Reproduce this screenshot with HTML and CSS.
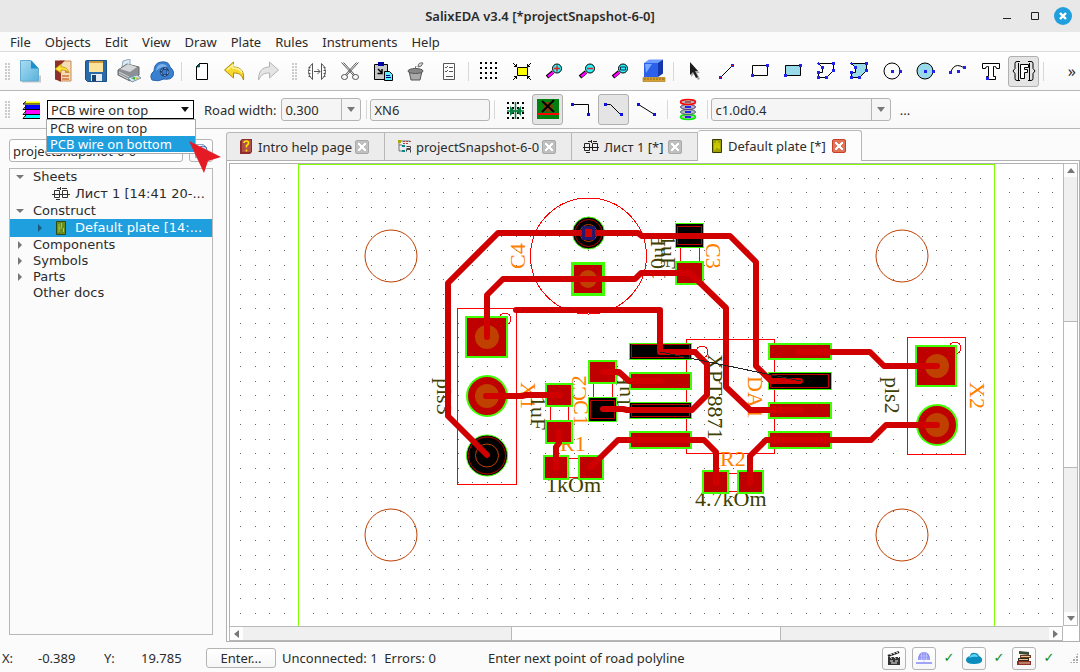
FILE: index.html
```html
<!doctype html>
<html lang="en">
<head>
	<meta charset="utf-8" />
	<title>SalixEDA v3.4 [*projectSnapshot-6-0]</title>
	<link rel="stylesheet" href="styles.css">
</head>
<body>
	<header class="titlebar">
		<h1>SalixEDA v3.4 [*projectSnapshot-6-0]</h1>
		<div class="winbtns">
			<button aria-label="Minimize"><svg width="18" height="18"><path d="M5 11.500h8" stroke="#222"/></svg></button>
			<button aria-label="Maximize"><svg width="18" height="18"><path d="M5.500 5.500h7v7h-7z" fill="none" stroke="#222"/></svg></button>
			<button aria-label="Close"><svg width="18" height="18"><circle cx="9" cy="9" r="9" fill="#209fdf"/><path d="M6 6l6 6M12 6l-6 6" stroke="#fff" stroke-width="2.400"/></svg></button>
		</div>
	</header>
	<nav class="menubar">
		<button>File</button>
		<button>Objects</button>
		<button>Edit</button>
		<button>View</button>
		<button>Draw</button>
		<button>Plate</button>
		<button>Rules</button>
		<button>Instruments</button>
		<button>Help</button>
	</nav>

	<div class="toolbar">
		<i class="grip"></i>
		<button aria-label="New"><svg width="24" height="24"><defs><linearGradient id="gnew" x1="0" y1="0" x2="1" y2="1"><stop offset="0" stop-color="#a9dcf2"/><stop offset="1" stop-color="#58b2dc"/></linearGradient></defs><path d="M4 22.500h18v-6" stroke="#c8c8c8" stroke-width="2" fill="none"/><path d="M2.500 1.500h10.500l7.500 8v12.500h-18z" fill="url(#gnew)" stroke="#64acd0"/><path d="M13 1.500v8h7.500z" fill="#1b8fc9"/></svg></button>
		<button aria-label="Open"><svg width="24" height="24"><path d="M9 2h11v20h-12z" fill="#f4dcb4" stroke="#c98c58"/><path d="M4 1.500h10l-4 4v17l-6-2z" fill="#8e2f2c"/><path d="M11 17h7M11 20h7M14 13h4" stroke="#d0743c" stroke-width="1.500"/><path d="M4 10l6-5v3c5 0 7 2 8 6-3-3-5-3-8-3v3z" fill="#ffe43a" stroke="#c08a14" stroke-width=".8"/></svg></button>
		<button aria-label="Save"><svg width="24" height="24"><path d="M1.500 2.500q0-1 1-1h20v21h-19l-2-2z" fill="#2a6aa8" stroke="#1c4f86"/><path d="M5 2h14v11h-14z" fill="#fbe39a"/><path d="M5 2h14v2h-14z" fill="#d09a3c"/><path d="M7 15h11v7h-11z" fill="#e4ecf2"/><path d="M8 16h4v6h-4z" fill="#17456f"/></svg></button>
		<button aria-label="Print"><svg width="24" height="24"><path d="M5 8l1-6 7-2 0 6z" fill="#dceaf6" stroke="#8fa6bc"/><path d="M1 11l9-6 12 3v8l-9 6-12-6z" fill="#8c9094" stroke="#666"/><path d="M3 10l8-5 9 3-7 5z" fill="#d4d6d8"/><path d="M2 13l10 5M2 15l9 5" stroke="#d8d8d8"/><path d="M11 19l9-3 4 3-9 4z" fill="#cfe4f5" stroke="#7d95aa"/><path d="M14 19l4-1v3z" fill="#3fa83a"/><path d="M18 18l4 1-2 2z" fill="#e0b83a"/></svg></button>
		<button aria-label="Cloud save"><svg width="24" height="24"><path d="M2 21q-3-5 2-9 0-8 7-9 8-1 9 5 5 4 3 9-2 4-9 3-6 3-12 1z" fill="#3a80d0" stroke="#2a62ac"/><path d="M6 12q1-7 6-7 4 0 5 3-5-1-11 4z" fill="#7cb2ea"/><circle cx="14.500" cy="13" r="3.500" fill="none" stroke="#1d3f72" stroke-width="2.500"/><circle cx="14.500" cy="13" r="3.500" fill="none" stroke="#a0bede" stroke-width="1" stroke-dasharray="2 2"/></svg></button>
		<i class="sep"></i>
		<button aria-label="New sheet"><svg width="24" height="24"><path d="M9.500 4.500h8v16h-11v-13z" fill="#fff" stroke="#000"/><path d="M6.500 8l3-3.500v3.500z" fill="#008080" stroke="#000" stroke-width=".6"/></svg></button>
		<button aria-label="Undo"><svg width="24" height="24"><path d="M1.500 11l9-8v5c7 0 11 4 10 13-2-6-5-7-10-7v5z" fill="#f6d92c" stroke="#b08a10"/><path d="M4 11l6-5v3c5 0 8 2 9 5" fill="none" stroke="#fff7a4" stroke-width="1.400"/></svg></button>
		<button aria-label="Redo"><svg width="24" height="24"><path d="M22.500 11l-9-8v5c-7 0-11 4-11 13 3-6 6-7 11-7v5z" fill="#e4e4e4" stroke="#b4b4b4"/></svg></button>
		<i class="grip wide"></i>
		<button aria-label="Mirror"><svg width="24" height="24" fill="none" stroke="#555"><path d="M7.500 4.500q-4 3-4 8t4 8zM16.500 4.500q4 3 4 8t-4 8zM9 12.500h6M12.500 10l2.500 2.500-2.500 2.500"/><path d="M4.500 8v10M19.500 8v10" stroke-width="2" stroke-dasharray="1 2"/></svg></button>
		<button aria-label="Cut"><svg width="24" height="24" fill="none" stroke="#555"><path d="M3.500 3.500l12 13M20.500 3.500l-12 13M5.500 3.500l11 12M18.500 3.500l-11 12"/><ellipse cx="6.500" cy="18" rx="3" ry="2.500"/><ellipse cx="17.500" cy="18" rx="3" ry="2.500"/></svg></button>
		<button aria-label="Paste"><svg width="24" height="24"><path d="M3.500 5.500h13v15h-13z" fill="#c8c8c8" stroke="#000"/><path d="M7 3h6v4h-6z" fill="#0000a0"/><path d="M7 10l4 4M11 10v4.500h-4.500" stroke="#000" stroke-width="1.500" fill="none"/><path d="M13.500 12.500h5l3 3v6h-8z" fill="#60f0ff" stroke="#000"/><path d="M15 16.500h4M15 18.500h5" stroke="#000080"/></svg></button>
		<button aria-label="Delete"><svg width="24" height="24"><path d="M5 12h13l-2 9h-9z" fill="#aaa" stroke="#555"/><ellipse cx="11.500" cy="12" rx="7.500" ry="2.500" fill="#888" stroke="#555"/><path d="M11 10l1-3M14 8q0-5 5-4-1 4-5 4z" fill="#ddd" stroke="#666"/></svg></button>
		<button aria-label="Properties"><svg width="24" height="24" fill="none" stroke="#555"><path d="M6.500 4.500h11v16h-11z"/><path d="M8 8l1 1 2-2M12 8.500h4M8 12l1 1 2-2M12 12.500h4M9 17.500h7"/></svg></button>
		<i class="sep"></i>
		<button aria-label="Grid"><svg width="24" height="24" stroke="#000" stroke-width="2" stroke-dasharray="2 3"><path d="M3 4h18M3 9h18M3 14h18M3 19h18"/></svg></button>
		<button aria-label="Fit"><svg width="24" height="24" fill="none" stroke="#000"><path d="M7.500 8.500h10v8h-10z" fill="#ff0"/><path d="M3 4l4 4M21 4l-4 4M3 21l4-4M21 21l-4-4M4 7.500h2.500v-2.500M20 7.500h-2.500v-2.500M4 17.500h2.500v2.500M20 17.500h-2.500v2.500"/></svg></button>
		<button aria-label="Zoom in"><svg width="24" height="24"><path d="M4 18l6-5" stroke="#000" stroke-width="4"/><path d="M5 17.500l5-4" stroke="#f0f" stroke-width="2.500"/><circle cx="14" cy="9.500" r="4.500" fill="#2ef0f8" stroke="#000"/><path d="M11 9.500h6M14 6.500v6" stroke="#e02020" stroke-width="1.500"/></svg></button>
		<button aria-label="Zoom out"><svg width="24" height="24"><path d="M4 18l6-5" stroke="#000" stroke-width="4"/><path d="M5 17.500l5-4" stroke="#f0f" stroke-width="2.500"/><circle cx="14" cy="9.500" r="4.500" fill="#2ef0f8" stroke="#000"/><path d="M11 9.500h6" stroke="#e02020" stroke-width="1.500"/></svg></button>
		<button aria-label="Zoom window"><svg width="24" height="24"><path d="M4 18l6-5" stroke="#000" stroke-width="4"/><path d="M5 17.500l5-4" stroke="#f0f" stroke-width="2.500"/><circle cx="14" cy="9.500" r="4.500" fill="#2ef0f8" stroke="#000"/><path d="M11.500 8h5v3h-5z" fill="none" stroke="#035"/></svg></button>
		<button aria-label="3D view"><svg width="24" height="24"><path d="M2 4l5-3.500 14 0-4 3.500z" fill="#6c9cff"/><path d="M2 4h14v14h-14z" fill="#2a60ea"/><path d="M16 4l5-3.500v14l-5 3.500z" fill="#1437ac"/><path d="M3 5h7l-6 9z" fill="#78a8ff"/><path d="M1 18.500h22v4h-22z" fill="#d8a030" stroke="#a07010" stroke-width=".6"/><path d="M3 19v2M6 19v2M9 19v2M12 19v2M15 19v2M18 19v2M21 19v2" stroke="#6b4800" stroke-width=".7"/></svg></button>
		<i class="sep"></i>
		<button aria-label="Select"><svg width="24" height="24"><path d="M9 5l9 9h-3l3 6-2 1-4-6-3 3z" fill="#aaa"/><path d="M8 3l8 9h-3l3 6-2 1-3-6-3 3z" fill="#1c1c1c"/></svg></button>
		<button aria-label="Line"><svg width="24" height="24"><path d="M6 18l12-12" stroke="#000"/><path d="M4 17h3v3h-3zM16 5h3v3h-3z" fill="#22e"/><path d="M5 18h1v1h-1zM17 6h1v1h-1z" fill="#f00"/></svg></button>
		<button aria-label="Rectangle"><svg width="24" height="24"><path d="M4.500 6.500h15v10h-15z" fill="none" stroke="#000"/><path d="M3 15h3v3h-3zM18 5h3v3h-3z" fill="#22e"/></svg></button>
		<button aria-label="Filled rectangle"><svg width="24" height="24"><path d="M4.500 6.500h15v10h-15z" fill="#98d9ea" stroke="#000"/><path d="M3 15h3v3h-3zM18 5h3v3h-3z" fill="#22e"/></svg></button>
		<button aria-label="Polygon"><svg width="24" height="24"><path d="M4.500 4.500h15v7l-7 7h-8v-5h4v-5z" fill="none" stroke="#000"/><path d="M3 4h3v1h-3zM4 3h1v3h-1zM18 3h3v3h-3zM18 10h3v3h-3zM11 17h3v3h-3zM3 17h3v3h-3zM3 12h3v3h-3zM7 7h3v3h-3z" fill="#22e"/></svg></button>
		<button aria-label="Filled polygon"><svg width="24" height="24"><path d="M4.500 4.500h15v7l-7 7h-8v-5h4v-5z" fill="#98d9ea" stroke="#000"/><path d="M3 4h3v1h-3zM4 3h1v3h-1zM18 3h3v3h-3zM18 10h3v3h-3zM11 17h3v3h-3zM3 17h3v3h-3zM3 12h3v3h-3zM7 7h3v3h-3z" fill="#22e"/></svg></button>
		<button aria-label="Circle"><svg width="24" height="24"><circle cx="12" cy="12" r="8" fill="none" stroke="#000"/><path d="M11 11h3v3h-3zM19 11h3v3h-3z" fill="#22e"/></svg></button>
		<button aria-label="Filled circle"><svg width="24" height="24"><circle cx="12" cy="12" r="8" fill="#98d9ea" stroke="#000"/><path d="M11 11h3v3h-3zM19 11h3v3h-3z" fill="#22e"/></svg></button>
		<button aria-label="Arc"><svg width="24" height="24"><path d="M4.500 14q2-7 7-7.500 3 0 7 2.500" fill="none" stroke="#000"/><path d="M3 12h3v3h-3zM11 11h3v3h-3zM17 7h3v3h-3z" fill="#22e"/></svg></button>
		<button aria-label="Text"><svg width="24" height="24"><path d="M3.500 4.500h17v5h-3q0-2-2-2h-1v10h2v3h-9v-3h2v-10h-1q-2 0-2 2h-3z" fill="#fff" stroke="#000"/><path d="M7 18h3v3h-3z" fill="#22e"/></svg></button>
		<button class="pressed" aria-label="Parameter text"><svg width="24" height="24" fill="none" stroke="#000"><path d="M8 2.500h-3q-2 0-2 2v5l-2 2.500 2 2.500v5q0 2 2 2h3M16 2.500h3q2 0 2 2v5l2 2.500-2 2.500v5q0 2-2 2h-3M6.500 4v17M17.500 4v17"/><path d="M8.500 5.500h8v3h-4v2h3v3h-3v6h-4z" fill="#fff"/></svg></button>
		<i class="sep"></i>
		<button class="more" aria-label="More">»</button>
	</div>

	<div class="toolbar second">
		<i class="grip"></i>
		<svg class="layers" width="18" height="20"><path d="M3 3h15" stroke="#ff0" stroke-width="3"/><path d="M3 7h15" stroke="#00f" stroke-width="4"/><path d="M3 12h15" stroke="#f0f" stroke-width="4"/><path d="M3 17h15" stroke="#0ff" stroke-width="4"/><path d="M4 1.500l-3 2.500h17M4 6l-3 3.500h17M4 11l-3 3.500h17M4 15l-3 3.500h17" fill="none" stroke="#000"/></svg>
		<div class="layerbox">
			<select class="layer" aria-label="Layer"><option>PCB wire on top</option><option>PCB wire on bottom</option></select>
			<ul class="popup" role="listbox" aria-label="Layer list">
				<li role="option">PCB wire on top</li>
				<li role="option" aria-selected="true" class="current">PCB wire on bottom</li>
			</ul>
			<svg class="pointer" width="34" height="34"><path d="M1 1l32 16-13 4-4 12z" fill="#e41a24"/></svg>
		</div>
		<label class="roadlabel" for="road">Road width:</label>
		<div class="combo road"><select id="road"><option>0.300</option></select></div>
		<i class="sep"></i>
		<input class="net" type="text" value="XN6" aria-label="Net name">
		<i class="sep last"></i>
		<button aria-label="Snap"><svg width="24" height="24"><path d="M4 5h18M4 10h18M4 15h18M4 20h18" stroke="#000" stroke-width="2" stroke-dasharray="2 3"/><path d="M12.500 4v17M4 13h17" stroke="#0a8040" stroke-width="1.500" fill="none"/><path d="M7 8l5 5-5 5zM18 8l-5 5 5 5z" fill="#0a8040"/></svg></button>
		<button class="pressed" aria-label="Clear loops"><svg width="24" height="24"><path d="M1 1h22v20h-22z" fill="#008010"/><circle cx="12" cy="9" r="5" fill="#804000"/><path d="M6 3l12 11M18 2l-12 12" stroke="#000" stroke-width="2"/><path d="M1 16h22" stroke="#f00" stroke-width="2"/></svg></button>
		<button aria-label="Right angle"><svg width="24" height="24"><path d="M4 6.500h15.500v10" fill="none" stroke="#000"/><path d="M2 5h3v3h-3zM18 15h3v3h-3z" fill="#11d"/></svg></button>
		<button class="pressed" aria-label="Chamfer"><svg width="24" height="24"><path d="M4 6.500h4.500l10 10" fill="none" stroke="#000"/><path d="M2 5h3v3h-3zM18 15h3v3h-3z" fill="#11d"/></svg></button>
		<button aria-label="Straight"><svg width="24" height="24"><path d="M3.500 6.500l16 10" fill="none" stroke="#000"/><path d="M2 5h3v3h-3zM18 15h3v3h-3z" fill="#11d"/></svg></button>
		<i class="sep last"></i>
		<button aria-label="Via"><svg width="24" height="24" fill="#b8b8b8"><path d="M12 3v18" stroke="#22e" stroke-width="6"/><ellipse cx="12" cy="19" rx="7.500" ry="2.500" stroke="#0e0" stroke-width="1.500"/><ellipse cx="12" cy="14" rx="7.500" ry="2.500" stroke="#466"/><ellipse cx="12" cy="9" rx="7.500" ry="2.500" stroke="#538"/><ellipse cx="12" cy="4" rx="7.500" ry="2.500" stroke="#f00" stroke-width="1.500"/><path d="M9 9h6M9 14h6M9 19h6" stroke="#22e" stroke-width="2"/><path d="M9 4h6" stroke="#800"/></svg></button>
		<i class="sep"></i>
		<div class="combo via"><select aria-label="Via type"><option>c1.0d0.4</option></select></div>
		<button class="dots" aria-label="Choose via">...</button>
	</div>

	<main class="work">
		<aside class="side">
			<div class="projrow">
				<div class="combo proj"><select aria-label="Project"><option>projectSnapshot-6-0</option></select></div>
				<button class="framed" aria-label="Reload"><svg width="18" height="18"><path d="M3.500 2.500h8l3 3v10h-11z" fill="#eef4fc" stroke="#8ba4c4"/><circle cx="11" cy="8" r="4" fill="#cddcf0" stroke="#4a6ea8"/></svg></button>
			</div>
			<ul class="tree">
				<li><i class="tw open"></i>Sheets</li>
				<li class="doc"><svg width="18" height="16" fill="none" stroke="#333"><path d="M2.500 4.500h5v7h-5zM10.500 4.500h5v7h-5zM0 8.500h18M5 2.500h3M8.500 1v3M4 13.500h4M10 2.500h5"/></svg>Лист 1 [14:41 20-...</li>
				<li><i class="tw open"></i>Construct</li>
				<li class="doc sel"><i class="tw"></i><svg width="18" height="16"><path d="M4.500 1.500h9v13h-9z" fill="#6a8c1c" stroke="#2c4a18"/><path d="M7 4v8M9.500 3v4M11.500 8v4M7 8h3" stroke="#a8cc3c"/></svg>Default plate [14:...</li>
				<li><i class="tw"></i>Components</li>
				<li><i class="tw"></i>Symbols</li>
				<li><i class="tw"></i>Parts</li>
				<li><i class="tw none"></i>Other docs</li>
			</ul>
		</aside>

		<section class="editor">
			<div class="tabs" role="tablist">
				<div class="tab t1" role="tab"><svg width="14" height="16"><path d="M1 2l2-2h10v13l-2 2h-10z" fill="#8c2c2c"/><path d="M3 1h9v12h-9z" fill="#b05048"/><path d="M5 4q0-2 2.500-2 2 0 2 2t-2 2.500v2M7.500 10.500v2" fill="none" stroke="#ffe800" stroke-width="1.600"/></svg><span>Intro help page</span><button class="x" aria-label="Close tab"></button></div>
				<div class="tab t2" role="tab"><svg width="14" height="16"><path d="M2 2v10h3M2 6h3M4 2h9" stroke="#777" fill="none"/><path d="M1 1h3v3h-3z" fill="#a8a800"/><path d="M6 2.500h8M6 4.500h6" stroke="#a84848" stroke-dasharray="2 1"/><path d="M5 6h3v2h-3zM5 11h3v2h-3z" fill="#088"/><path d="M9.500 7.500h4v2h-4M9.500 12.500v-2h4v3" stroke="#444" fill="none"/></svg><span>projectSnapshot-6-0</span><button class="x" aria-label="Close tab"></button></div>
				<div class="tab t3" role="tab"><svg width="16" height="16" fill="none" stroke="#222"><path d="M1.500 4.500h5v7h-5zM9.500 4.500h5v7h-5zM0 8.500h16M5 2.500h3M8.500 1v3M3 13.500h4M10 2.500h4"/></svg><span>Лист 1 [*]</span><button class="x" aria-label="Close tab"></button></div>
				<div class="tab t4 active" role="tab" aria-selected="true"><svg width="12" height="16"><path d="M1.500 1.500h9v13h-9z" fill="#a0a000" stroke="#383800"/><path d="M4 5v7M6 3v5M8 5v6M4 9h4" stroke="#e8e800"/></svg><span>Default plate [*]</span><button class="x hot" aria-label="Close tab"></button></div>
			</div>
			<div class="view">
				<svg class="board" role="img" aria-label="Default plate">
					<defs>
						<pattern id="grid" width="29" height="29" x="240" y="178" patternUnits="userSpaceOnUse"><path d="M0 0h1v1h-1zM15 0h1v1h-1zM0 14h1v1h-1zM15 14h1v1h-1z" fill="#666"/></pattern>
					</defs>
					<g transform="translate(-230 -164)">
						<rect x="229" y="163" width="4000" height="3000" fill="url(#grid)" shape-rendering="crispEdges"/>
						<path d="M298 164h697v1h-697zM298 164h1v3000h-1zM994 164h1v3000h-1z" class="edge"/>
						<g class="hole">
							<circle cx="391" cy="256" r="26"/><circle cx="902" cy="256" r="26"/>
							<circle cx="391" cy="535" r="26"/><circle cx="902" cy="535" r="26"/>
						</g>
						<!-- part outlines -->
						<g class="thin">
							<circle cx="588.500" cy="256" r="58"/>
							<path d="M457.500 308.500h59v176h-59zM686.500 339.500h88v114h-88zM907.500 337.500h58v117h-58z"/>
							<path d="M680.500 248v14M699.500 248v14M550.500 407v14M568.500 407v14M593.500 384v14M612.500 384v14M569 458.500h10M569 477.500h10M729 473.500h8M729 491.500h8"/>
							<circle cx="505" cy="319" r="6"/><circle cx="702" cy="352" r="6"/><circle cx="955" cy="348" r="6"/>
						</g>
						<g class="ref">
							<text transform="translate(525 269) rotate(-90)">C4</text>
							<text transform="translate(706 243) rotate(90)">C3</text>
							<text transform="translate(521 382) rotate(90)">X1</text>
							<text transform="translate(574 400) rotate(90)">C1</text>
							<text transform="translate(586 401) rotate(-90)">C2</text>
							<text transform="translate(748 376) rotate(90)">DA1</text>
							<text transform="translate(970 382) rotate(90)">X2</text>
							<text x="560" y="451">R1</text>
							<text x="720" y="466">R2</text>
						</g>
						<g class="val">
							<text transform="translate(665 280) rotate(-90)">10uF</text>
							<text transform="translate(661 235) rotate(90)">1uF</text>
							<text transform="translate(437 378) rotate(90)">pls3</text>
							<text transform="translate(531 396) rotate(90)">1uF</text>
							<text transform="translate(630 408) rotate(-90)">1uF</text>
							<text transform="translate(708 354) rotate(90)">XPT8871</text>
							<text transform="translate(885 377) rotate(90)">pls2</text>
							<text x="546" y="492">1kOm</text>
							<text x="695" y="506">4.7kOm</text>
						</g>
						<!-- copper pads -->
						<g class="pad">
							<rect x="466" y="317" width="41" height="40"/><circle cx="487" cy="396" r="20"/>
							<rect x="916" y="346" width="40" height="40"/><circle cx="937" cy="425" r="20"/>
							<rect x="676" y="262" width="27" height="22"/>
							<rect x="546" y="384" width="26" height="22"/><rect x="546" y="421" width="26" height="22"/>
							<rect x="544" y="456" width="24" height="23"/><rect x="579" y="456" width="24" height="23"/>
							<rect x="589" y="361" width="27" height="22"/>
							<rect x="630" y="373" width="61" height="16"/><rect x="630" y="432" width="61" height="16"/>
							<rect x="769" y="344" width="62" height="15"/><rect x="769" y="403" width="62" height="15"/><rect x="769" y="432" width="62" height="16"/>
							<rect x="703" y="471" width="25" height="22"/><rect x="738" y="471" width="25" height="22"/>
						</g>
						<rect x="572.500" y="263.500" width="31" height="31" class="pad thick"/>
						<g class="drill"><circle cx="487" cy="337" r="12"/><circle cx="487" cy="396" r="12"/><circle cx="588" cy="279" r="9"/><circle cx="937" cy="366" r="12"/><circle cx="937" cy="425" r="12"/></g>
						<g class="near">
							<circle cx="487" cy="455.500" r="20.500"/><circle cx="588.500" cy="233" r="16"/>
							<path d="M675.500 223.500h28v24h-28zM588.500 397.500h28v24h-28zM629.500 343.500h62v16h-62zM629.500 402.500h62v16h-62zM768.500 372.500h63v17h-63z"/>
						</g>
						<g class="inner">
							<circle cx="487" cy="455.500" r="18.500"/><circle cx="588.500" cy="233" r="13.500"/>
							<path d="M677.500 226.500h24v18h-24zM590.500 400.500h24v18h-24zM631.500 344.500h58v13h-58zM631.500 404.500h58v12h-58zM770.500 374.500h58v13h-58z"/>
						</g>
						<g class="hole"><circle cx="487" cy="455.500" r="11.500"/><circle cx="588.500" cy="233" r="8.500"/></g>
						<!-- routed wires -->
						<g class="wire">
							<path d="M487 455L448 416V283L498 233H638L642 236H730L756 262V366L771 381H800"/>
							<path d="M487 337V295L503 279H635L641 273H690L726 308V387L750 410H801"/>
							<path d="M516 310H660V352H695L707 364V395L692 410H627L623 409H603"/>
							<path d="M486 396H522L526 395H560M603 372H619L629 381H661M559 432V443L556 447V468"/>
							<path d="M591 467L618 440H704L716 452V483M750 483V456L766 440H871L886 425H937M799 352H870L884 366H937"/>
						</g>
						<path d="M583.500 227.500h10v11h-10z" fill="#d00000" stroke="#24186a" stroke-width="3"/>
						<path d="M660 352L801 381" stroke="#222" stroke-width="1" shape-rendering="crispEdges"/>
					</g>
				</svg>
				<div class="vscroll"><i class="ar up"></i><i class="trough"></i><i class="thumb"></i><i class="trough"></i><i class="ar down"></i></div>
				<div class="hscroll"><i class="ar left"></i><i class="trough"></i><i class="thumb"></i><i class="trough"></i><i class="ar right"></i></div>
			</div>
		</section>
	</main>

	<footer class="status">
		<span class="c1">X:</span><span class="c2">-0.389</span><span class="c3">Y:</span><span class="c4">19.785</span>
		<button class="framed enter">Enter...</button>
		<span class="errs">Unconnected: 1&nbsp; Errors: 0</span>
		<span class="hint">Enter next point of road polyline</span>
		<button class="framed sq" aria-label="Video"><svg width="18" height="18"><path d="M3 8h12v8h-12z" fill="#333"/><path d="M2.500 6l11-4 1 2-11 4z" fill="#222"/><path d="M5 5l2 1M8 4l2 1M11 3l2 1M5 8l2 1.500M9 8l2 1.500M13 8l1 1M5 12h3M10 12h3M6 14h6" stroke="#eee"/></svg></button>
		<button class="framed sq" aria-label="Network"><svg width="18" height="18"><path d="M3 11q0-8 6-8t6 8z" fill="#8c90f0"/><path d="M9 3v12M5 7h8M4 10h10M6.500 4v7M11.500 4v7" stroke="#c4c6ff" stroke-width=".8"/><path d="M1 13h16v2h-16z" fill="#a0a4f8"/></svg></button>
		<b class="ok">✓</b>
		<button class="framed sq" aria-label="Cloud"><svg width="18" height="18"><path d="M1 11q0-3 4-4 1-4 5-3 3 0 4 3 4 2 3 5-1 3-8 3-8 0-8-4z" fill="#0c8cbc"/><path d="M4 9q2-4 6-4 3 1 3 3-5-1-9 1z" fill="#5cd8f4"/></svg></button>
		<b class="ok">✓</b>
		<button class="framed sq" aria-label="Library"><svg width="18" height="18"><path d="M4 2l10 1v3l-10-1z" fill="#3c4a34"/><path d="M5 6h11v3h-11z" fill="#6a3a20"/><path d="M3 9h11v3h-11z" fill="#302820"/><path d="M2 12h14v4h-14z" fill="#8c3028"/><path d="M6 7.500h9M4 10.500h9M4 14h11" stroke="#e8c890"/></svg></button>
		<b class="ok">✓</b>
		<i class="sizer"></i>
	</footer>
</body>
</html>
```
FILE: styles.css
```css
* { box-sizing: border-box; }
html, body { height: 100%; }
body { margin: 0; display: flex; flex-direction: column; overflow: hidden; background: #fbfbfb; color: #2b2b2b; font-family: 'Noto Sans', 'Open Sans', sans-serif; font-size: 13px; line-height: 16px; }
button, select, input { font: inherit; color: inherit; margin: 0; padding: 0; border: 0; background: none; }
svg { display: block; flex: none; }
ul { list-style: none; margin: 0; padding: 0; }

.titlebar { display: grid; grid-template-columns: 100px 1fr 100px; align-items: center; height: 32px; flex: none; background: #e8e8e8; }
.titlebar h1 { grid-column: 2; margin: 0; text-align: center; font-size: 13px; font-weight: 600; }
.winbtns { display: flex; justify-content: flex-end; gap: 10px; padding-right: 8px; }
.menubar { display: flex; gap: 14px; height: 20px; flex: none; padding: 0 10px; border-bottom: 1px solid #dcdcdc; }

.toolbar { display: flex; align-items: center; height: 39px; flex: none; background: linear-gradient(#fff, #f8f8f8); border-bottom: 1px solid #b8b8b8; }
.toolbar.second { height: 38px; }
.toolbar button { display: flex; align-items: center; justify-content: center; flex: none; width: 33px; height: 31px; }
.toolbar button.pressed { width: 31px; margin: 0 1px; border: 1px solid #b0b0b0; border-radius: 3px; background: #e4e4e4; }
.toolbar .more { width: auto; margin-left: auto; padding-right: 4px; font-size: 16px; }
.grip { flex: none; width: 5px; height: 17px; margin: 0 3px 0 5px; background: radial-gradient(circle at 1px 1px, #ccc 1px, transparent 1px) 0 0 / 3px 3px; }
.grip.wide { margin: 0 3px 0 8px; }
.sep { flex: none; width: 1px; height: 19px; margin: 0 3px; background: #d8d8d8; }
.sep.last { margin: 0 3px 0 4px; }

.layers { margin: 0 7px 0 9px; }
.layerbox { position: relative; flex: none; width: 147px; }
.layer { display: block; width: 100%; height: 19px; padding-left: 3px; border: 1px solid #000; background: #fff; appearance: none; }
.layerbox::after { content: ""; position: absolute; top: 7px; right: 5px; border: 4px solid transparent; border-top: 5px solid #111; border-bottom: 0; }
.popup { position: absolute; z-index: 5; top: 19px; left: -1px; width: 150px; padding-bottom: 1px; border: 1px solid #aaa; background: #fff; line-height: 16px; }
.popup li { padding-left: 3px; }
.popup .current { background: #209fdf; color: #fff; }
.pointer { position: absolute; z-index: 6; top: 40px; left: 141px; }
.roadlabel { margin: 0 5px 0 10px; white-space: nowrap; }
.combo { position: relative; height: 23px; }
.combo select { display: block; width: 100%; height: 100%; padding-left: 3px; border: 1px solid #b4b4b4; border-radius: 3px; background: linear-gradient(#b4b4b4, #b4b4b4) right 18px top / 1px 100% no-repeat, #f5f5f5; appearance: none; }
.combo::after { content: ""; position: absolute; top: 9px; right: 6px; border: 4px solid transparent; border-top: 5px solid #777; border-bottom: 0; }
.road { width: 80px; margin-right: 2px; }
.via { width: 180px; }
.net { width: 120px; height: 22px; padding-left: 3px; border: 1px solid #b4b4b4; border-radius: 3px; background: #f5f5f5; }
.toolbar .dots { width: 27px; }

.work { display: flex; flex: 1; min-height: 0; }
.side { display: flex; flex-direction: column; flex: none; width: 226px; padding: 10px 13px 7px 9px; }
.projrow { display: flex; gap: 6px; margin-bottom: 6px; }
.proj { flex: 1; }
.proj select { background: #fff; }
.framed { display: flex; align-items: center; justify-content: center; border: 1px solid #b4b4b4; border-radius: 3px; background: linear-gradient(#fff, #f6f6f6); }
.projrow .framed { width: 24px; }
.tree { flex: 1; border: 1px solid #b8b8b8; font-family: 'DejaVu Sans', sans-serif; }
.tree li { display: flex; align-items: center; height: 16px; padding-left: 6px; white-space: nowrap; }
.tree .doc { height: 18px; padding-left: 42px; }
.tree .doc svg { margin-right: 5px; }
.tree .sel { padding-left: 26px; background: #209fdf; color: #fff; }
.tw { flex: none; width: 17px; height: 8px; }
.tw::before { content: ""; display: block; width: 0; margin-left: 2px; border: 4px solid transparent; border-left: 4px solid #777; border-right: 0; }
.sel .tw { width: 16px; }
.sel .tw::before { border-left-color: #1a5a80; }
.tw.open::before { margin: 2px 0 0; border: 4px solid transparent; border-top: 4px solid #777; border-bottom: 0; }
.tw.none { visibility: hidden; }

.editor { display: flex; flex-direction: column; flex: 1; min-width: 0; padding-top: 1px; }
.tabs { display: flex; align-items: flex-end; height: 30px; }
.tab { display: flex; align-items: center; height: 28px; padding: 0 15px 0 12px; border: 1px solid #b8b8b8; border-bottom: 0; border-left-width: 0; background: #ececec; white-space: nowrap; }
.tab span { flex: 1; margin-left: 5px; }
.t1 { width: 159px; border-left-width: 1px; border-radius: 3px 0 0 0; }
.t2 { width: 187px; }
.t3 { width: 126px; padding-left: 11px; }
.tab.active { width: 164px; height: 31px; margin-bottom: -1px; z-index: 1; padding-left: 13px; border-radius: 3px 3px 0 0; background: #fdfdfd; }
.x { flex: none; width: 14px; height: 14px; border: 1px solid #a8a8a8; border-radius: 2px; background: linear-gradient(45deg, transparent 40%, #fff 40% 60%, transparent 60%) center / 8px 8px no-repeat, linear-gradient(-45deg, transparent 40%, #fff 40% 60%, transparent 60%) center / 8px 8px no-repeat, #c0c0c0; }
.x.hot { border-color: #c8402c; background-color: #e47458; }
.view { display: grid; grid-template: 1fr 15px / 1fr 15px; flex: 1; min-height: 0; padding: 2px 1px 0 2px; border: 1px solid #b0b0b0; background: #fff; }
.board { width: 100%; height: 100%; overflow: hidden; border: solid #b0b0b0; border-width: 1px 0 0 1px; }
.vscroll, .hscroll { display: flex; border: 1px solid #b8b8b8; }
.vscroll { flex-direction: column; }
.hscroll { grid-row: 2; }
.trough { flex: 1; background: #f0f0f0; }
.thumb { flex: none; background: #fdfdfd; border: solid #b8b8b8; }
.vscroll .thumb { height: 147px; border-width: 1px 0; }
.hscroll .thumb { width: 270px; border-width: 0 1px; }
.ar { display: flex; align-items: center; justify-content: center; flex: none; width: 13px; height: 13px; background: #fdfdfd; }
.ar::before { content: ""; border: 4px solid transparent; }
.up::before { border-bottom: 5px solid #777; border-top: 0; }
.down::before { border-top: 5px solid #777; border-bottom: 0; }
.left::before { border-right: 5px solid #777; border-left: 0; }
.right::before { border-left: 5px solid #777; border-right: 0; }

.edge { fill: #80ff00; shape-rendering: crispEdges; }
.hole { fill: none; stroke: #c04000; }
.thin { fill: none; stroke: #f00; shape-rendering: crispEdges; }
.ref, .val { font-family: 'Liberation Serif', serif; font-size: 22px; }
.ref { fill: #ff8000; }
.val { fill: #404000; }
.pad { fill: #bf0000; stroke: #40ff00; stroke-width: 2; }
.pad.thick { stroke-width: 3; }
.drill { fill: #c04000; }
.near { fill: #000; stroke: #40ff00; }
.inner { fill: none; stroke: #c00000; }
.wire { fill: none; stroke: #d00000; stroke-width: 6; stroke-linecap: round; stroke-linejoin: round; }

.status { display: flex; align-items: center; height: 30px; flex: none; padding: 2px 2px 0; white-space: nowrap; }
.c1 { width: 36px; }
.c2 { width: 66px; }
.c3 { width: 37px; }
.c4 { width: 65px; }
.enter { width: 70px; height: 20px; margin-right: 6px; }
.errs { width: 206px; }
.hint { flex: 1; }
.sq { width: 24px; height: 23px; }
.sq + .sq { margin-left: 6px; }
.ok { width: 26px; text-align: center; color: #0a8a1a; font-family: 'DejaVu Sans', sans-serif; font-weight: 400; }
.sizer { width: 8px; height: 10px; margin-left: 8px; background: radial-gradient(circle at 1px 1px, #aaa 1px, transparent 1px) 0 0 / 3px 3px; clip-path: polygon(100% 0, 100% 100%, 0 100%); }
```
